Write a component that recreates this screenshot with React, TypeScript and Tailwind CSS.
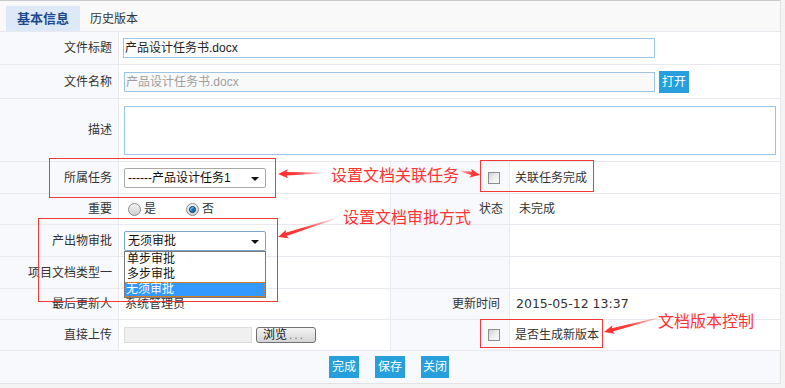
import React from 'react'

// annotation arrow: tapered shaft, head at the tip
const arrowPoints = (tx: number, ty: number, sx: number, sy: number) => {
    const dx = sx - tx
    const dy = sy - ty
    const len = Math.hypot(dx, dy)
    const ux = dx / len
    const uy = dy / len
    const nx = -uy
    const ny = ux
    const p = (a: number, b: number) => `${(tx + ux * a + nx * b).toFixed(2)},${(ty + uy * a + ny * b).toFixed(2)}`
    return [p(0, 0), p(10, 4.5), p(8.5, 1.7), p(len, 0.4), p(len, -0.4), p(8.5, -1.7), p(10, -4.5)].join(' ')
}

const arrows = [
    { id: 'a1', tx: 278, ty: 174, sx: 321, sy: 173 },
    { id: 'a2', tx: 278, ty: 237, sx: 334, sy: 219 },
    { id: 'a3', tx: 604, ty: 332, sx: 658, sy: 318 },
    { id: 'a4', tx: 480, ty: 175, sx: 460, sy: 171 },
]

const Label = ({ children, className = '' }: { children?: React.ReactNode; className?: string }) => (
    <div className={`bg-[#f8f9fc] border-r border-[#e8e9ee] flex items-center justify-end pr-[6px] ${className}`}>
        {children}
    </div>
)

const Cell = ({ children, className = '' }: { children?: React.ReactNode; className?: string }) => (
    <div className={`border-r border-[#e8e9ee] flex items-center ${className}`}>{children}</div>
)

const Caret = () => (
    <span className="absolute right-[6px] top-[8px] w-0 h-0 border-l-[4px] border-r-[4px] border-t-[4px] border-l-transparent border-r-transparent border-t-[#111]"></span>
)

const Checkbox = () => (
    <span className="block w-[12px] h-[12px] border border-[#8e8e8e] bg-linear-to-br from-[#cfcfcf] via-[#eeeeee] to-[#fafafa]"></span>
)

const Radio = ({ checked }: { checked?: boolean }) => (
    <span className="flex items-center justify-center w-[13px] h-[13px] rounded-full border border-[#8a8a8a] bg-linear-to-b from-[#f4f4f4] to-[#d0d0d0]">
        {checked && (
            <span className="block w-[7px] h-[7px] rounded-full bg-[#1c6fb3] border border-[#0d3f6e] shadow-[inset_1px_1px_1px_#7cc3f2]"></span>
        )}
    </span>
)

const App = () => {
    return (
        <div className="relative w-[785px] h-[388px] bg-[#f4f4f4] overflow-hidden text-[12px] leading-[14px] text-[#333] font-['Liberation_Sans','Noto_Sans_CJK_SC',sans-serif]">
            <div className="w-[781px] bg-white border-r border-[#e3e3e3]">
                <div className="h-px bg-[#c9c9c9]"></div>
                {/* tabs */}
                <div className="h-[30px] bg-[#f9f9f9] flex items-end pl-[6px]">
                    <div className="h-[25px] w-[74px] bg-[#dde8f8] text-[#1d4a8c] font-bold text-[13px] flex items-center justify-center">基本信息</div>
                    <div className="h-[25px] ml-[10px] flex items-center">历史版本</div>
                </div>

                <div className="border-t border-[#e8e9ee]">
                    {/* 文件标题 */}
                    <div className="grid grid-cols-[119px_662px] h-[33px] border-b border-[#e8e9ee]">
                        <Label>文件标题</Label>
                        <Cell className="pl-[4px]">
                            <div className="w-[532px] h-[20px] border border-[#9cc4e6] bg-white flex items-center pl-[1px] text-[#222]">产品设计任务书.docx</div>
                        </Cell>
                    </div>
                    {/* 文件名称 */}
                    <div className="grid grid-cols-[119px_662px] h-[34px] border-b border-[#e8e9ee]">
                        <Label>文件名称</Label>
                        <Cell className="pl-[5px]">
                            <div className="w-[531px] h-[20px] border border-[#9cc4e6] bg-[#f9f9f9] flex items-center pl-[1px] text-[#a0a0a0]">产品设计任务书.docx</div>
                            <button className="ml-[4px] w-[30px] h-[22px] bg-[#269fdc] text-white text-[12px] flex items-center justify-center">打开</button>
                        </Cell>
                    </div>
                    {/* 描述 */}
                    <div className="grid grid-cols-[119px_662px] h-[63px] border-b border-[#e8e9ee]">
                        <Label>描述</Label>
                        <Cell className="pl-[5px]">
                            <div className="w-[652px] h-[49px] border border-[#9cc4e6] bg-white"></div>
                        </Cell>
                    </div>
                    {/* 所属任务 */}
                    <div className="grid grid-cols-[119px_272px_119px_271px] h-[32px] border-b border-[#e8e9ee]">
                        <Label>所属任务</Label>
                        <Cell className="pl-[5px]">
                            <div className="relative w-[142px] h-[20px] border border-[#a9a9a9] rounded-[2px] bg-white flex items-center pl-[3px] text-[#111]">
                                ------产品设计任务1
                                <Caret />
                            </div>
                        </Cell>
                        <Label className="pr-[9px]"><Checkbox /></Label>
                        <Cell className="pl-[5px]">关联任务完成</Cell>
                    </div>
                    {/* 重要 / 状态 */}
                    <div className="grid grid-cols-[119px_272px_119px_271px] h-[31px] border-b border-[#e8e9ee]">
                        <Label>重要</Label>
                        <Cell className="pl-[9px]">
                            <Radio />
                            <span className="ml-[3px]">是</span>
                            <span className="ml-[30px]"><Radio checked /></span>
                            <span className="ml-[3px]">否</span>
                        </Cell>
                        <Label className="pr-[6px]">状态</Label>
                        <Cell className="pl-[9px]">未完成</Cell>
                    </div>
                    {/* 产出物审批 */}
                    <div className="grid grid-cols-[119px_272px_119px_271px] h-[32px] border-b border-[#e8e9ee]">
                        <Label>产出物审批</Label>
                        <Cell className="pl-[5px]">
                            <div className="relative w-[142px] h-[20px] border border-[#7da3d0] rounded-[2px] bg-white flex items-center pl-[3px] text-[#111]">
                                无须审批
                                <Caret />
                                <div className="absolute left-[-1px] top-[19px] z-10 w-[142px] border border-[#7a7a7a] bg-white text-[#111]">
                                    <div className="h-[15px] flex items-center pl-[2px]">单步审批</div>
                                    <div className="h-[15px] flex items-center pl-[2px]">多步审批</div>
                                    <div className="h-[15px] flex items-center pl-[1px] bg-[#3399ff] text-white outline-1 outline-dotted outline-offset-[-1px] outline-[#d9822b]">无须审批</div>
                                </div>
                            </div>
                        </Cell>
                        <Label></Label>
                        <Cell></Cell>
                    </div>
                    {/* 项目文档类型一 */}
                    <div className="grid grid-cols-[119px_272px_119px_271px] h-[32px] border-b border-[#e8e9ee]">
                        <Label>项目文档类型一</Label>
                        <Cell></Cell>
                        <Label></Label>
                        <Cell></Cell>
                    </div>
                    {/* 最后更新人 */}
                    <div className="grid grid-cols-[119px_272px_119px_271px] h-[31px] border-b border-[#e8e9ee]">
                        <Label>最后更新人</Label>
                        <Cell className="pl-[6px]">系统管理员</Cell>
                        <Label className="pr-[9px]">更新时间</Label>
                        <Cell className="pl-[6px] font-['DejaVu_Sans',sans-serif] text-[12.5px]">2015-05-12 13:37</Cell>
                    </div>
                    {/* 直接上传 */}
                    <div className="grid grid-cols-[119px_272px_119px_271px] h-[31px] border-b border-[#e8e9ee]">
                        <Label>直接上传</Label>
                        <Cell className="pl-[5px]">
                            <div className="w-[128px] h-[16px] border border-[#dcdcdc] bg-[#f0f0f0]"></div>
                            <button className="ml-[4px] w-[60px] h-[16px] border border-[#707070] rounded-[3px] bg-linear-to-b from-[#f4f4f4] to-[#d4d4d4] text-[12px] leading-[12px] text-[#111] flex items-center pl-[6px]">浏览<span className="text-[#777] tracking-[2px] ml-[2px]">...</span></button>
                        </Cell>
                        <Label className="pr-[9px]"><Checkbox /></Label>
                        <Cell className="pl-[5px]">是否生成新版本</Cell>
                    </div>
                    {/* footer buttons */}
                    <div className="h-[33px] bg-[#f8f9fc] border-b border-[#e3e3e3] flex items-center justify-center gap-[16px] pr-[2px]">
                        <button className="w-[30px] h-[22px] bg-[#269fdc] text-white flex items-center justify-center">完成</button>
                        <button className="w-[30px] h-[22px] bg-[#269fdc] text-white flex items-center justify-center">保存</button>
                        <button className="w-[28px] h-[22px] bg-[#269fdc] text-white flex items-center justify-center">关闭</button>
                    </div>
                </div>
            </div>

            {/* annotations drawn over the form */}
            <svg className="absolute inset-0 pointer-events-none z-20" width="785" height="388" viewBox="0 0 785 388">
                <defs>
                    {arrows.map((a) => (
                        <linearGradient key={a.id} id={`g-${a.id}`} gradientUnits="userSpaceOnUse" x1={a.tx} y1={a.ty} x2={a.sx} y2={a.sy}>
                            <stop offset="0" stopColor="#ff3030" stopOpacity="1" />
                            <stop offset="0.45" stopColor="#ff3030" stopOpacity="0.95" />
                            <stop offset="1" stopColor="#ff3030" stopOpacity="0.15" />
                        </linearGradient>
                    ))}
                </defs>
                <rect x="49.5" y="158.5" width="226" height="39" fill="none" stroke="#f03a3a" strokeWidth="1" />
                <rect x="480.5" y="160.5" width="113" height="31" fill="none" stroke="#f03a3a" strokeWidth="1" />
                <rect x="38.5" y="218.5" width="239" height="83" fill="none" stroke="#f03a3a" strokeWidth="1" />
                <rect x="480.5" y="319.5" width="122" height="28" fill="none" stroke="#f03a3a" strokeWidth="1" />
                {arrows.map((a) => (
                    <polygon key={a.id} points={arrowPoints(a.tx, a.ty, a.sx, a.sy)} fill={`url(#g-${a.id})`} />
                ))}
            </svg>
            <span className="absolute left-[331px] top-[166px] z-20 text-[16px] leading-[16px] text-[#ff3333] font-['Noto_Sans_CJK_SC',sans-serif]">设置文档关联任务</span>
            <span className="absolute left-[343px] top-[208px] z-20 text-[16px] leading-[16px] text-[#ff3333] font-['Noto_Sans_CJK_SC',sans-serif]">设置文档审批方式</span>
            <span className="absolute left-[658px] top-[312px] z-20 text-[16px] leading-[16px] text-[#ff3333] font-['Noto_Sans_CJK_SC',sans-serif]">文档版本控制</span>
        </div>
    )
}

export default App
